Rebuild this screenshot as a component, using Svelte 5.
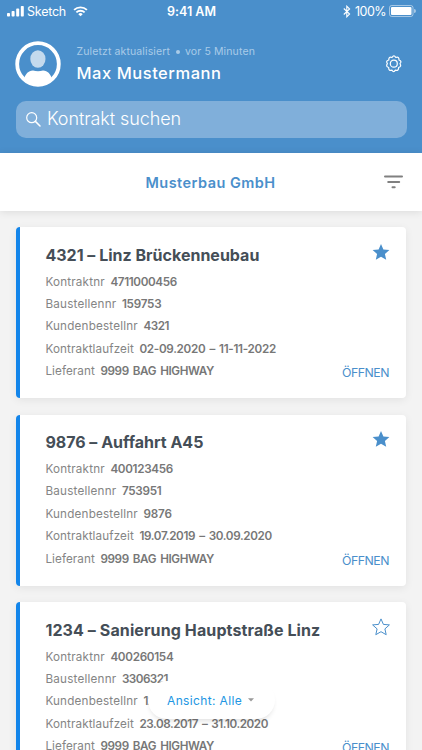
<script>
  const cards = [
    {
      title: '4321 – Linz Brückenneubau', width: 214, starred: true,
      rows: [['Kontraktnr', 59.5, '4711000456', 66.5], ['Baustellennr', 71, '159753', 39.5], ['Kundenbestellnr', 92.5, '4321', 25.5], ['Kontraktlaufzeit', 88.5, '02-09.2020 – 11-11-2022', 136.5], ['Lieferant', 49.5, '9999 BAG HIGHWAY', 113.5]]
    },
    {
      title: '9876 – Auffahrt A45', width: 158, starred: true,
      rows: [['Kontraktnr', 59.5, '400123456', 62.5], ['Baustellennr', 71, '753951', 39.5], ['Kundenbestellnr', 92.5, '9876', 28.5], ['Kontraktlaufzeit', 88.5, '19.07.2019 – 30.09.2020', 132.5], ['Lieferant', 49.5, '9999 BAG HIGHWAY', 113.5]]
    },
    {
      title: '1234 – Sanierung Hauptstraße Linz', width: 275, starred: false,
      rows: [['Kontraktnr', 59.5, '400260154', 63], ['Baustellennr', 71, '3306321', 46], ['Kundenbestellnr', 92.5, '1234', 25.5], ['Kontraktlaufzeit', 88.5, '23.08.2017 – 31.10.2020', 128.5], ['Lieferant', 49.5, '9999 BAG HIGHWAY', 113.5]]
    }
  ];

  // Spreads the tracking of a text so that it takes the given width.
  function fit(node, width) {
    const natural = node.getBoundingClientRect().width;
    node.style.letterSpacing = `${(width - natural) / node.textContent.length}px`;
  }
</script>

<div class="screen">
  <header>
    <div class="status">
      <div class="carrier">
        <svg width="18" height="11" viewBox="0 0 18 11" fill="#fff"><rect x="0" y="7" width="3" height="3.6" rx=".8"/><rect x="4.6" y="5" width="3" height="5.6" rx=".8"/><rect x="9.2" y="2.6" width="3" height="8" rx=".8"/><rect x="13.8" y="0" width="3" height="10.6" rx=".8"/></svg>
        <span class="sketch" use:fit={39}>Sketch</span>
        <svg class="wifi" width="15" height="11" viewBox="0 0 16 12" fill="none" stroke="#fff" stroke-width="2"><path d="M1 4.3a10 10 0 0 1 14 0M3.5 7a6.4 6.4 0 0 1 9 0"/><path d="M8 11.2 5.6 8.9a3.5 3.5 0 0 1 4.8 0z" fill="#fff" stroke="none"/></svg>
      </div>
      <strong class="clock"><span use:fit={49}>9:41 AM</span></strong>
      <div class="power">
        <svg width="8" height="13" viewBox="0 0 8 13" fill="none" stroke="#fff" stroke-width="1.1"><path d="M.8 3.5 6.6 9 3.8 11.8V1.2L6.6 4 .8 9.5"/></svg>
        <span class="percent" use:fit={31}>100%</span>
        <svg width="27" height="12" viewBox="0 0 27 12"><rect x=".5" y=".5" width="23.5" height="11" rx="2.2" fill="none" stroke="#fff" stroke-opacity=".5"/><rect x="2" y="2" width="20.5" height="8" rx="1" fill="#fff"/><path d="M25 4a2 2 0 0 1 0 4z" fill="#fff" fill-opacity=".5"/></svg>
      </div>
    </div>

    <div class="profile">
      <svg class="avatar" width="46" height="46" viewBox="0 0 46 46"><circle cx="23" cy="23" r="20.8" fill="none" stroke="#fff" stroke-width="3.8"/><ellipse cx="22.9" cy="18" rx="7.6" ry="8.7" fill="#c4daed"/><path d="M9 37.5C11 32.500 13 30 18 29.500c3 1 7 1 10 0 5 .5 7 3 9 8A20 20 0 0 1 9 37.500z" fill="#fff"/></svg>
      <div class="who">
        <div class="updated"><span use:fit={93.5}>Zuletzt aktualisiert</span><i></i><span use:fit={70}>vor 5 Minuten</span></div>
        <div class="name"><span use:fit={145}>Max Mustermann</span></div>
      </div>
      <svg class="gear" width="18" height="18" viewBox="0 0 18 18" fill="none" stroke="#fff" stroke-width="1.2" stroke-linejoin="round"><path d="M7 2.500Q8.900-.6 10.800 2.500 14.200 1.300 14 5q3.300 1.200 1 3.700 1.900 3-1.400 3.800.2 3.600-3.200 2.600-1.700 2.900-3.500 0-3.500 1-3.200-2.600Q.4 11.600 2.400 8.700.4 5.800 3.800 5 3.600 1.300 7 2.500z"/><circle cx="8.800" cy="8.700" r="3.500"/></svg>
    </div>

    <div class="search">
      <svg width="15" height="15" viewBox="0 0 15 15" fill="none" stroke="#fff" stroke-width="1.2"><circle cx="5.7" cy="5.7" r="5"/><path d="m9.4 9.4 4.600 4.600" stroke-width="1.5" stroke-linecap="round"/></svg>
      <span use:fit={134}>Kontrakt suchen</span>
    </div>
  </header>

  <div class="company">
    <span use:fit={130}>Musterbau GmbH</span>
    <svg width="19" height="14" viewBox="0 0 19 14" stroke="#808080" stroke-width="2" stroke-linecap="round"><path d="M1 1.500h17M4.200 6.900h11M8.500 12.200h2.200"/></svg>
  </div>

  <main>
    {#each cards as card}
      <article>
        <div class="details">
          <h2><span use:fit={card.width}>{card.title}</span></h2>
          {#each card.rows as [label, labelWidth, value, valueWidth]}
            <div class="row"><span use:fit={labelWidth}>{label}</span><b use:fit={valueWidth}>{value}</b></div>
          {/each}
        </div>
        <div class="actions">
          <svg width="18" height="18" viewBox="0 0 18 18" fill={card.starred ? '#4a8fcb' : 'none'} stroke="#4a8fcb" stroke-width={card.starred ? 0 : 1} stroke-linejoin="round"><path d="m9 .9 2.400 5.500 6 .5-4.500 4 1.300 5.800L9 13.700l-5.200 3 1.300-5.800-4.500-4 6-.5z"/></svg>
          <a href="#open"><span use:fit={47}>ÖFFNEN</span></a>
        </div>
      </article>
    {/each}
  </main>

  <button class="view"><span use:fit={75}>Ansicht: Alle</span><svg width="6" height="4" viewBox="0 0 6 4" fill="#999"><path d="M0 .3h6L3 3.500z"/></svg></button>
</div>

<style>
  :global(body) { margin: 0; }
  .screen { position: relative; width: 422px; height: 750px; overflow: hidden; background: #f3f3f3; font-family: Inter, "Open Sans", sans-serif; }
  span, b { display: inline-block; white-space: nowrap; }
  svg { display: block; flex: none; }
  header { height: 153px; background: #4a8fcb; color: #fff; }
  .status { display: flex; height: 22px; align-items: center; padding: 0 6px 0 6.5px; }
  .carrier, .power { display: flex; align-items: center; }
  .carrier { width: 160.5px; }
  .sketch { font-size: 12.5px; margin-left: 2.5px; }
  .wifi { margin-left: 7px; }
  .clock { font-size: 12.5px; font-weight: 600; }
  .power { flex: 1; justify-content: flex-end; }
  .percent { font-size: 12.5px; margin: 0 3px 0 4px; }
  .profile { display: flex; align-items: center; height: 46px; padding: 0 19.5px 0 15px; margin-top: 18.5px; }
  .who { flex: 1; margin-left: 15.5px; }
  .updated { display: flex; align-items: center; height: 16px; margin-top: 2px; font-size: 10.5px; color: #a9cbe8; }
  .updated i { width: 4px; height: 4px; border-radius: 50%; background: #a9cbe8; margin: 0 5px 0 6px; }
  .name { font-size: 16.5px; line-height: 26px; font-weight: 500; }
  .search { display: flex; align-items: center; gap: 6.5px; height: 37px; margin: 14px 15.5px 0; padding-left: 10px; border-radius: 10px; background: #80afda; font-size: 18px; font-weight: 300; }
  .search span { line-height: 24px; margin-top: -1px; }
  .company { position: relative; z-index: 1; display: grid; grid-template-columns: 1fr auto 1fr; align-items: center; height: 58px; padding: 0 19px; box-sizing: border-box; background: #fff; box-shadow: 0 1px 8px rgba(0, 0, 0, .1); color: #4a8fcb; font-size: 14.5px; font-weight: 600; }
  .company span { grid-column: 2; margin-left: -1px; }
  .company svg { justify-self: end; }
  main { display: flex; flex-direction: column; gap: 16.5px; padding: 16.3px 16.5px 0 16.4px; }
  article { display: flex; flex: none; justify-content: space-between; height: 171px; box-sizing: border-box; padding: 15.5px 16.5px 0 25.5px; border-left: 4px solid #1385ea; border-radius: 4px; background: #fff; box-shadow: 0 2px 8px rgba(0, 0, 0, .07); }
  .details { margin-left: -.5px; }
  h2 { height: 24px; margin: 0 0 3.8px; font-size: 16px; line-height: 24px; font-weight: 700; color: #454e57; }
  .row { display: flex; gap: 5.5px; height: 22.4px; line-height: 22.4px; font-size: 11.7px; color: #858585; }
  .row b { font-weight: 600; color: #777; word-spacing: 1.5px; }
  .actions { display: flex; flex-direction: column; align-items: flex-end; }
  .actions svg { margin-right: -.6px; }
  .actions a { margin-top: 102.5px; color: #4a8fcb; font-size: 12.3px; line-height: 20px; text-decoration: none; }
  .view { position: absolute; left: 148px; top: 681px; display: flex; align-items: center; gap: 6px; width: 127px; height: 38px; padding: 0 0 0 19px; border: 0; border-radius: 19px; background: #fff; box-shadow: 0 4px 5px -2px rgba(0, 0, 0, .12); color: #2196e3; font: 12px Inter, sans-serif; }
</style>
